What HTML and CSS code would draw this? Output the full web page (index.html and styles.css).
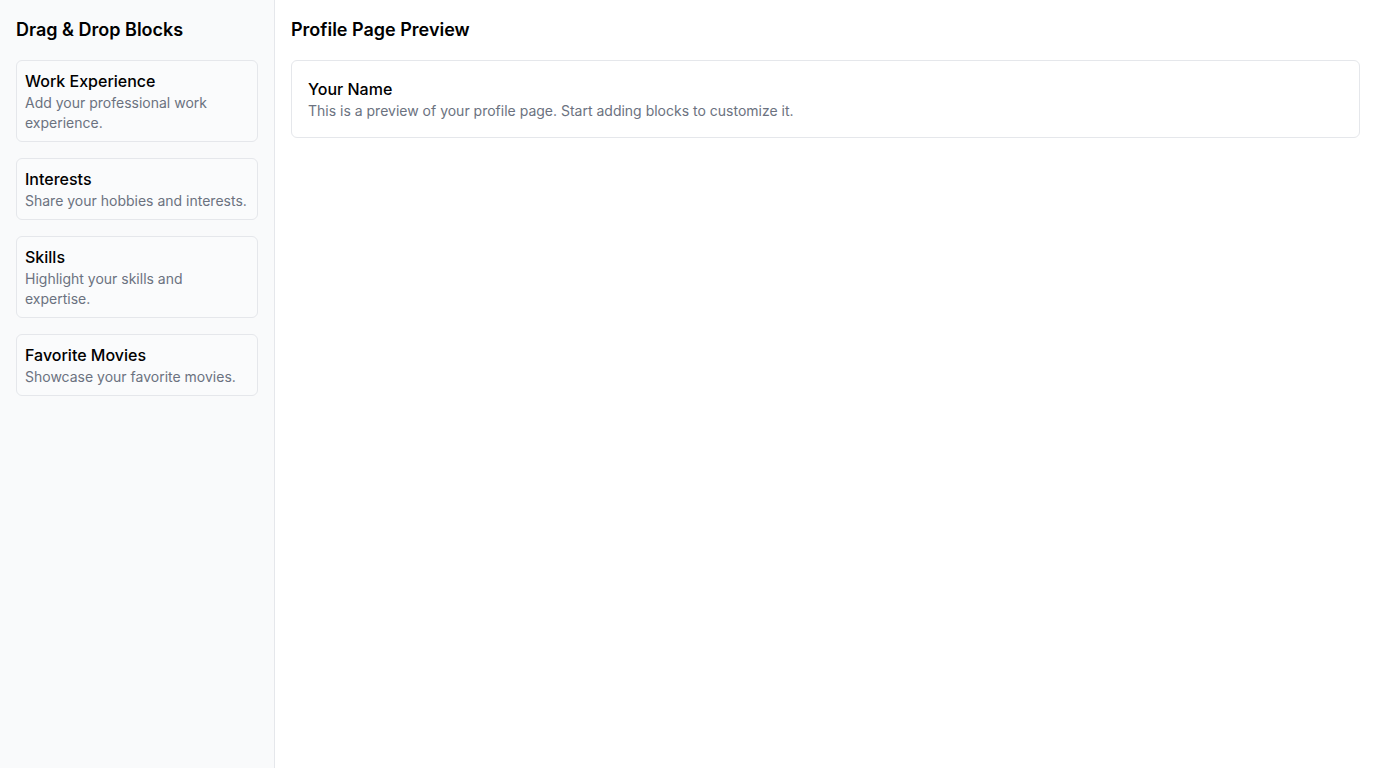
FILE: index.html
```html
<!DOCTYPE html>
<html lang="en">
<head>
<meta charset="utf-8">
<title>Profile Builder</title>
<link rel="stylesheet" href="styles.css">
</head>
<body>
<div class="app">
  <aside class="sidebar">
    <h2 class="title">Drag &amp; Drop Blocks</h2>
    <div class="blocks">
      <div class="block">
        <h3 class="block-title">Work Experience</h3>
        <p class="block-desc">Add your professional work experience.</p>
      </div>
      <div class="block">
        <h3 class="block-title">Interests</h3>
        <p class="block-desc">Share your hobbies and interests.</p>
      </div>
      <div class="block">
        <h3 class="block-title">Skills</h3>
        <p class="block-desc">Highlight your skills and expertise.</p>
      </div>
      <div class="block">
        <h3 class="block-title">Favorite Movies</h3>
        <p class="block-desc">Showcase your favorite movies.</p>
      </div>
    </div>
  </aside>
  <main class="main">
    <h2 class="title">Profile Page Preview</h2>
    <div class="preview">
      <h3 class="block-title">Your Name</h3>
      <p class="block-desc">This is a preview of your profile page. Start adding blocks to customize it.</p>
    </div>
  </main>
</div>
</body>
</html>
```

FILE: styles.css
```css
* { box-sizing: border-box; }
html, body { margin: 0; padding: 0; height: 100%; }
body {
  font-family: Inter, "Noto Sans", sans-serif;
  color: #111;
  background: #fff;
}
.app {
  display: flex;
  height: 100vh;
}
.sidebar {
  width: 275px;
  flex-shrink: 0;
  background: #f9fafb;
  border-right: 1px solid #e5e7eb;
  padding: 16px;
}
.title {
  margin: 0 0 16px;
  font-size: 18px;
  line-height: 28px;
  font-weight: 600;
  color: #000;
}
.blocks {
  display: flex;
  flex-direction: column;
  gap: 16px;
}
.block {
  background: #fafbfc;
  border: 1px solid #e5e7eb;
  border-radius: 6px;
  padding: 8px;
}
.block-title {
  margin: 0;
  font-size: 16px;
  line-height: 24px;
  font-weight: 500;
  color: #000;
}
.block-desc {
  margin: 0;
  font-size: 14px;
  line-height: 20px;
  color: #6b7280;
}
.main {
  flex: 1;
  padding: 16px;
}
.preview {
  border: 1px solid #e5e7eb;
  border-radius: 6px;
  padding: 16px;
  background: #fff;
}
```
